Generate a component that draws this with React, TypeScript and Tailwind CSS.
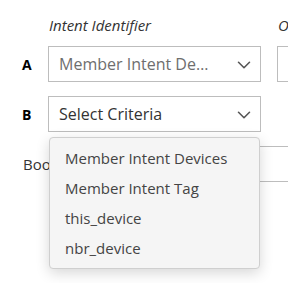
import { ChevronDown } from 'lucide-react';

const options = ['Member Intent Devices', 'Member Intent Tag', 'this_device', 'nbr_device'];

function SelectBox({ value, muted }: { value: string; muted?: boolean }) {
  return (
    <div className="flex h-[36px] w-[213px] shrink-0 items-center border border-[#bdbdbd] bg-white pl-[10px] pr-[5px]">
      <span className={`min-w-0 flex-1 truncate pr-[24px] text-[16px] ${muted ? 'text-[#6e6e6e]' : 'text-[#333]'}`}>{value}</span>
      <ChevronDown className="mt-[1px] shrink-0 text-[#555]" size={22} strokeWidth={1.7} />
    </div>
  );
}

export default function App() {
  return (
    <div className="relative h-[283px] w-[288px] overflow-hidden bg-white pl-[22px] pt-[14px] font-['Open_Sans',sans-serif] text-[#333]">
      {/* Cabeçalho */}
      <div className="flex whitespace-nowrap text-[15px] italic leading-[22px]">
        <span className="w-[26px] shrink-0" />
        <span className="w-[213px] shrink-0 pl-[1px]">Intent Identifier</span>
        <span className="ml-[17px]">Operator</span>
      </div>

      {/* Linha A */}
      <div className="mt-[10px] flex items-center">
        <span className="w-[26px] shrink-0 text-[14px] font-bold text-black">A</span>
        <SelectBox value="Member Intent Devices" muted />
        <div className="ml-[16px] h-[36px] w-[120px] shrink-0 border border-[#bdbdbd]" />
      </div>

      {/* Linha B */}
      <div className="relative mt-[14px] flex items-center">
        <span className="w-[26px] shrink-0 text-[14px] font-bold text-black">B</span>
        <SelectBox value="Select Criteria" />

        {/* Menu */}
        <ul className="absolute left-[27px] top-[41px] z-10 w-[211px] rounded-[4px] border border-[#cfcfcf] bg-[#f5f5f5] py-[5px] shadow-[0_4px_14px_rgba(0,0,0,0.16)]">
          {options.map((o) => (
            <li key={o} className="flex h-[30px] items-center px-[15px] text-[15px] text-[#444]">
              {o}
            </li>
          ))}
        </ul>
      </div>

      {/* Expressão */}
      <div className="mt-[14px] flex items-center whitespace-nowrap">
        <span className="w-[120px] shrink-0 overflow-hidden pl-[1px] text-[15px]">Boolean Expression</span>
        <div className="h-[36px] w-[220px] shrink-0 border border-[#bdbdbd]" />
      </div>
    </div>
  );
}
